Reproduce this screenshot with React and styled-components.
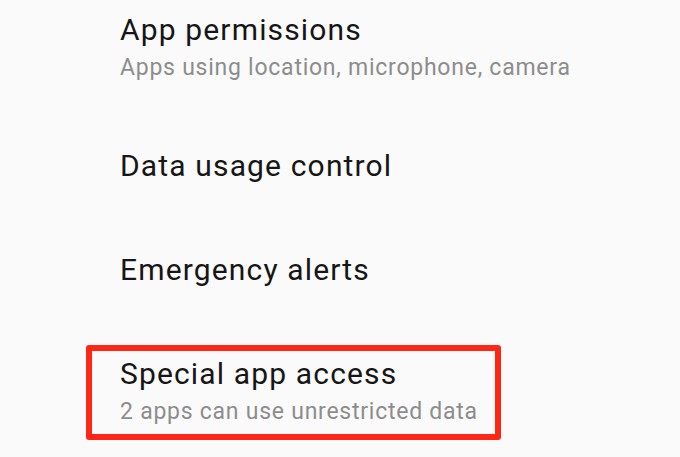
import React from "react";
import styled, { createGlobalStyle } from "styled-components";

const Global = createGlobalStyle`
  html, body { margin: 0; padding: 0; background: #fafafa; }
  body { width: 680px; height: 457px; overflow: hidden; font-family: Roboto, "Noto Sans", sans-serif; }
`;

const Screen = styled.div`
  width: 680px;
  height: 457px;
  overflow: hidden;
  background: #fafafa;
`;

const List = styled.div`
  display: flex;
  flex-direction: column;
  margin-top: -22px;
`;

const Row = styled.div`
  position: relative;
  display: flex;
  flex-direction: column;
  justify-content: center;
  box-sizing: border-box;
  padding: 0 40px 0 120px;
  height: ${(p) => (p.$twoLine ? "136px" : "104px")};
  padding-top: ${(p) => (p.$twoLine ? "34px" : "0")};
  padding-bottom: ${(p) => (p.$twoLine ? "31px" : "0")};
`;

const Title = styled.div`
  font-size: 30px;
  line-height: 36px;
  color: #161616;
  letter-spacing: 1.15px;
  white-space: nowrap;
`;

const Subtitle = styled.div`
  margin-top: 5px;
  font-size: 23px;
  line-height: 30px;
  color: #8d8d8d;
  letter-spacing: 0.75px;
  white-space: nowrap;
`;

const Highlight = styled.div`
  position: absolute;
  left: 86px;
  top: 23px;
  width: 415px;
  height: 95px;
  box-sizing: border-box;
  border: 6px solid #fe2614;
  border-radius: 3px;
  pointer-events: none;
`;

const items = [
  { title: "App permissions", sub: "Apps using location, microphone, camera" },
  { title: "Data usage control" },
  { title: "Emergency alerts" },
  { title: "Special app access", sub: "2 apps can use unrestricted data", highlight: true },
];

export default function App() {
  return (
    <Screen>
      <Global />
      <List>
        {items.map((it) => (
          <Row key={it.title} $twoLine={!!it.sub}>
            <Title>{it.title}</Title>
            {it.sub && <Subtitle>{it.sub}</Subtitle>}
            {it.highlight && <Highlight />}
          </Row>
        ))}
      </List>
    </Screen>
  );
}
